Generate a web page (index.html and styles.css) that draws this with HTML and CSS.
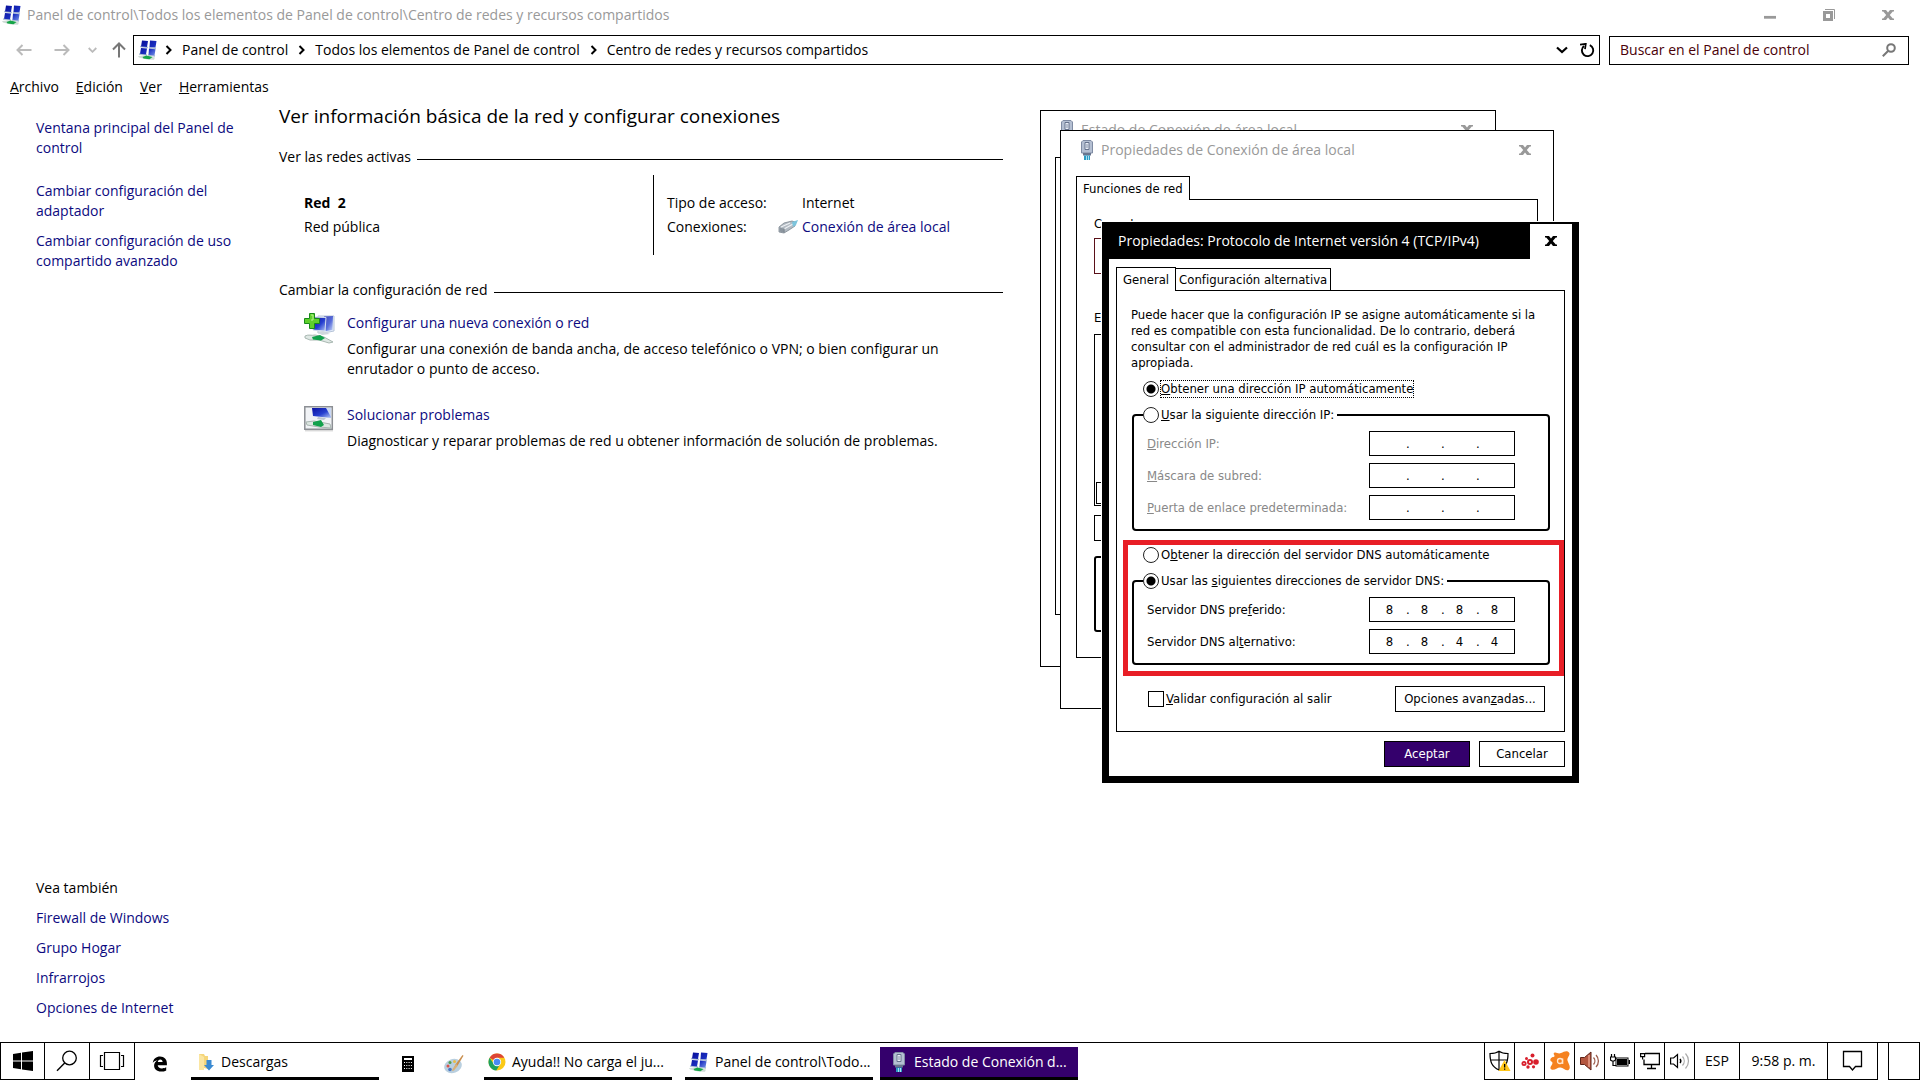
FILE: index.html
```html
<!DOCTYPE html>
<html lang="es">
<head>
<meta charset="utf-8">
<meta name="viewport" content="width=device-width, initial-scale=1">
<title>Centro de redes y recursos compartidos</title>
<link rel="stylesheet" href="styles.css">
</head>
<body>
<svg class="sprite" aria-hidden="true">
  <defs>
    <linearGradient id="screen" x1="0" y1="0" x2="1" y2="1">
      <stop offset="0" stop-color="#0a10a0"/><stop offset=".55" stop-color="#2740d0"/><stop offset="1" stop-color="#b8ccf6"/>
    </linearGradient>
    <linearGradient id="mini" x1="0" y1="0" x2="1" y2="1">
      <stop offset="0" stop-color="#060c98"/><stop offset=".6" stop-color="#1a2fc0"/><stop offset="1" stop-color="#7f9cec"/>
    </linearGradient>
    <symbol id="i-network" viewBox="0 0 20 20">
      <path d="M2 6.500l8 1M11 7.500l7 1M1 14l8 1M10 15l7 1" stroke="#aebfd4" stroke-width="1.500"/>
      <path d="M4 .5l6 .6-1 6-6-.6zM12 .5l6.500.6-1 6.400-6-.6zM3 8l6 .6-1 6-6-.8zM11 8.500l6.500.7-1 6.300-6-.7z" fill="url(#mini)"/>
      <path d="M0 16l6-.6 11 2.200-1 2.200-7-.4-8-2z" fill="#cfdcd6"/>
      <path d="M4.500 17l4-1.600 6 1.700-3 2.100-6-.7z" fill="#16a548"/>
    </symbol>
    <symbol id="i-plug" viewBox="0 0 14 22">
      <path d="M3 1.500h8l1.500 1.500v11h-11V3z" fill="#b4bfd2" stroke="#7f8ba3"/>
      <path d="M5 3.500h4v7H5z" fill="#e9eef6" stroke="#66728c"/>
      <path d="M6.500 5h1v4h-1z" fill="#8390aa"/>
      <path d="M3 14h8v2.500H3z" fill="#69758e"/>
      <path d="M4 16.500h6V21H4z" fill="#2c9bc4"/><path d="M6 17h1v4H6zM8 17h1v4H8z" fill="#a8e2f2"/>
    </symbol>
    <symbol id="i-close" viewBox="0 0 12 12">
      <path d="M0 1h4l2 2.600L8 1h4v1.500h-1.200L7.800 6l3 3.500H12V11H8L6 8.400 4 11H0V9.500h1.200l3-3.500-3-3.500H0z" fill="currentColor"/>
    </symbol>
    <symbol id="i-chevron" viewBox="0 0 8 10"><path d="M1.500 1l4 4-4 4" fill="none" stroke="currentColor" stroke-width="2"/></symbol>
  </defs>
</svg>

<header class="titlebar">
  <svg class="ico20"><use href="#i-network"/></svg>
  <h1>Panel de control\Todos los elementos de Panel de control\Centro de redes y recursos compartidos</h1>
  <div class="caption">
    <button type="button" aria-label="Minimizar"><svg viewBox="0 0 13 12"><path d="M0 7h13v3H0z" fill="#999"/></svg></button>
    <button type="button" aria-label="Restaurar"><svg viewBox="0 0 12 12"><path d="M0 2h10v10H0zM3 5v4h4V5z" fill="#999" fill-rule="evenodd"/><path d="M2 .5h9.500V10" fill="none" stroke="#999"/></svg></button>
    <button type="button" aria-label="Cerrar"><svg viewBox="0 0 12 12"><use href="#i-close"/></svg></button>
  </div>
</header>

<nav class="navbar" aria-label="Navegación">
  <div class="history">
    <button type="button" aria-label="Atrás" class="off"><svg width="16" height="12" viewBox="0 0 16 12"><path d="M15.500 6H1.500M6.500 1l-5 5 5 5" fill="none" stroke="currentColor" stroke-width="2"/></svg></button>
    <button type="button" aria-label="Adelante" class="off"><svg width="16" height="12" viewBox="0 0 16 12"><path d="M.5 6h14M9.500 1l5 5-5 5" fill="none" stroke="currentColor" stroke-width="2"/></svg></button>
    <button type="button" aria-label="Recientes" class="off"><svg width="9" height="6" viewBox="0 0 9 6"><path d="M.7 1l3.800 3.800L8.300 1" fill="none" stroke="currentColor" stroke-width="1.800"/></svg></button>
    <button type="button" aria-label="Subir"><svg width="14" height="16" viewBox="0 0 14 16"><path d="M7 15.500V1.500M1 7.500l6-6 6 6" fill="none" stroke="currentColor" stroke-width="2"/></svg></button>
  </div>
  <div class="address">
    <svg class="ico20"><use href="#i-network"/></svg>
    <svg class="sep"><use href="#i-chevron"/></svg><a href="#">Panel de control</a>
    <svg class="sep"><use href="#i-chevron"/></svg><a href="#">Todos los elementos de Panel de control</a>
    <svg class="sep"><use href="#i-chevron"/></svg><a href="#">Centro de redes y recursos compartidos</a>
    <button type="button" class="push" aria-label="Ubicaciones anteriores"><svg width="12" height="8" viewBox="0 0 12 8"><path d="M1 1.500l5 4.500 5-4.500" fill="none" stroke="#000" stroke-width="2.200"/></svg></button>
    <button type="button" aria-label="Actualizar"><svg width="15" height="15" viewBox="0 0 15 15"><path d="M9.800 2.200a5.700 5.700 0 1 1-5.800.8" fill="none" stroke="#000" stroke-width="1.900"/><path d="M0 1.600L5.800.8 5 6.200" fill="none" stroke="#000" stroke-width="1.700"/></svg></button>
  </div>
  <div class="search">
    <input type="text" aria-label="Buscar en el Panel de control" placeholder="Buscar en el Panel de control">
    <svg width="14" height="14" viewBox="0 0 14 14"><circle cx="9" cy="5" r="3.800" fill="none" stroke="#777" stroke-width="2"/><path d="M6.300 7.700L.8 13.200" stroke="#777" stroke-width="2"/></svg>
  </div>
</nav>

<nav class="menubar" aria-label="Menú">
  <button type="button"><u>A</u>rchivo</button>
  <button type="button"><u>E</u>dición</button>
  <button type="button"><u>V</u>er</button>
  <button type="button"><u>H</u>erramientas</button>
</nav>

<div class="body">
  <aside class="side">
    <ul class="tasks">
      <li class="home"><a href="#">Ventana principal del Panel de control</a></li>
      <li><a href="#">Cambiar configuración del adaptador</a></li>
      <li><a href="#">Cambiar configuración de uso compartido avanzado</a></li>
    </ul>
    <div class="also">
      <h2>Vea también</h2>
      <a href="#">Firewall de Windows</a>
      <a href="#">Grupo Hogar</a>
      <a href="#">Infrarrojos</a>
      <a href="#">Opciones de Internet</a>
    </div>
  </aside>

  <main class="content">
    <h2 class="lead">Ver información básica de la red y configurar conexiones</h2>
    <h3 class="rule">Ver las redes activas</h3>
    <section class="net">
      <div class="net-name"><strong>Red&nbsp; 2</strong><span>Red pública</span></div>
      <dl class="net-info">
        <dt>Tipo de acceso:</dt><dd>Internet</dd>
        <dt>Conexiones:
          <svg class="cable" viewBox="0 0 20 14"><path d="M1 7l5-4 8-2 3 1v4l-6 4-5 3-5-1z" fill="#b3bbc3" stroke="#7c868f" stroke-width=".8"/><path d="M3 7l9-4M6 9l9-5" stroke="#eef1f4" stroke-width="1.200"/><path d="M1.500 7.500l4 1v4l-4-1z" fill="#8b959e"/><path d="M6 8.500v4" stroke="#68747e"/><path d="M14 2l6-2-2 5-3 2z" fill="#7cc4dc"/></svg>
        </dt><dd><a href="#">Conexión de área local</a></dd>
      </dl>
    </section>
    <h3 class="rule">Cambiar la configuración de red</h3>
    <section class="action">
      <svg class="act-ico" viewBox="0 0 32 32">
        <path d="M14 3h16v15l-5 1-11 1z" fill="#e6edf8" stroke="#b6c4d8"/><path d="M20 3.500l9-.5-.5 14-7 1z" fill="url(#screen)" opacity=".75"/><path d="M9 4l13 .5L21 18l-12-1z" fill="url(#screen)" stroke="#d4deee"/>
        <path d="M13 19l6-1 7 3-8 1z" fill="#cfd7dd"/>
        <path d="M1 23c4-2 6 0 10-1l9 2 9 5-4 1-10-3-9 0-5-2z" fill="#dfe8e4" stroke="#a9b8b2"/><path d="M8 24l8-2 5 3-4 2.500-8-1z" fill="#12a14c"/>
        <path d="M5.500.5h5v5h5v5h-5v5h-5v-5h-5v-5h5z" fill="#5fd02c" stroke="#188a1a"/><path d="M7 2h2v5H7" stroke="#b9f391" fill="none"/>
      </svg>
      <div><a href="#">Configurar una nueva conexión o red</a>
      <p>Configurar una conexión de banda ancha, de acceso telefónico o VPN; o bien configurar un enrutador o punto de acceso.</p></div>
    </section>
    <section class="action">
      <svg class="act-ico" viewBox="0 0 32 32">
        <path d="M.8 1.800h27.500v22.500H.8z" fill="#f1f3f6" stroke="#8c8f94" stroke-width="1.500"/><path d="M1 25.800h28" stroke="#c9c9c9"/>
        <path d="M8 3h19v10L9 11z" fill="url(#screen)"/><path d="M22 3h5v9z" fill="#c9d7f4"/><path d="M14 12l8 1-2 2-7-1z" fill="#bcc6d0"/>
        <path d="M2 17l8-1 16 3 1 4-12-1-12-2z" fill="#dde7e2" stroke="#a8b5b0"/><path d="M9 17l8-2 3 5-3 2-8-2z" fill="#12a14c"/>
      </svg>
      <div><a href="#">Solucionar problemas</a>
      <p>Diagnosticar y reparar problemas de red u obtener información de solución de problemas.</p></div>
    </section>
  </main>
</div>

<div class="win win-status" role="dialog" aria-label="Estado de Conexión de área local">
  <div class="win-title"><svg class="plug"><use href="#i-plug"/></svg><span>Estado de Conexión de área local</span><svg class="x"><use href="#i-close"/></svg></div>
  <div class="pane"></div>
</div>

<div class="win win-props" role="dialog" aria-label="Propiedades de Conexión de área local">
  <div class="win-title"><svg class="plug"><use href="#i-plug"/></svg><span>Propiedades de Conexión de área local</span><svg class="x"><use href="#i-close"/></svg></div>
  <div class="tabs"><button type="button" class="tab on">Funciones de red</button></div>
  <div class="pane">
    <span class="line">Conectar</span>
    <div class="adapter"></div>
    <span class="line">Esta</span>
    <div class="items"><div class="scroll"></div></div>
    <div class="btn-edge"></div>
    <div class="desc"></div>
  </div>
</div>

<form class="win win-ip" role="dialog" aria-label="Propiedades: Protocolo de Internet versión 4 (TCP/IPv4)">
  <div class="ip-title"><span>Propiedades: Protocolo de Internet versión 4 (TCP/IPv4)</span><button type="button" aria-label="Cerrar"><svg class="x"><use href="#i-close"/></svg></button></div>
  <div class="tabs"><button type="button" class="tab on">General</button><button type="button" class="tab">Configuración alternativa</button></div>
  <div class="pane">
    <p>Puede hacer que la configuración IP se asigne automáticamente si la red es compatible con esta funcionalidad. De lo contrario, deberá consultar con el administrador de red cuál es la configuración IP apropiada.</p>
    <label class="radio first"><input type="radio" name="ip" checked><span class="focus"><u>O</u>btener una dirección IP automáticamente</span></label>
    <fieldset>
      <legend><label class="radio"><input type="radio" name="ip"><span><u>U</u>sar la siguiente dirección IP:</span></label></legend>
      <div class="row off"><label for="ip1"><u>D</u>irección IP:</label><div class="ip"><input id="ip1" disabled><i>.</i><input aria-label="Dirección IP 2" disabled><i>.</i><input aria-label="Dirección IP 3" disabled><i>.</i><input aria-label="Dirección IP 4" disabled></div></div>
      <div class="row off"><label for="ma1"><u>M</u>áscara de subred:</label><div class="ip"><input id="ma1" disabled><i>.</i><input aria-label="Máscara 2" disabled><i>.</i><input aria-label="Máscara 3" disabled><i>.</i><input aria-label="Máscara 4" disabled></div></div>
      <div class="row off"><label for="pe1"><u>P</u>uerta de enlace predeterminada:</label><div class="ip"><input id="pe1" disabled><i>.</i><input aria-label="Puerta 2" disabled><i>.</i><input aria-label="Puerta 3" disabled><i>.</i><input aria-label="Puerta 4" disabled></div></div>
    </fieldset>
    <div class="mark">
      <label class="radio"><input type="radio" name="dns"><span>O<u>b</u>tener la dirección del servidor DNS automáticamente</span></label>
      <fieldset>
        <legend><label class="radio"><input type="radio" name="dns" checked><span>Usar las <u>s</u>iguientes direcciones de servidor DNS:</span></label></legend>
        <div class="row"><label for="d1">Servidor DNS pre<u>f</u>erido:</label><div class="ip"><input id="d1" value="8"><i>.</i><input aria-label="Preferido 2" value="8"><i>.</i><input aria-label="Preferido 3" value="8"><i>.</i><input aria-label="Preferido 4" value="8"></div></div>
        <div class="row"><label for="a1">Servidor DNS al<u>t</u>ernativo:</label><div class="ip"><input id="a1" value="8"><i>.</i><input aria-label="Alternativo 2" value="8"><i>.</i><input aria-label="Alternativo 3" value="4"><i>.</i><input aria-label="Alternativo 4" value="4"></div></div>
      </fieldset>
    </div>
    <div class="foot"><label class="check"><input type="checkbox"><span><u>V</u>alidar configuración al salir</span></label><button type="button" class="btn wide"><span>Opciones avan<u>z</u>adas...</span></button></div>
  </div>
  <div class="actions"><button type="button" class="btn primary">Aceptar</button><button type="button" class="btn">Cancelar</button></div>
</form>

<footer class="taskbar">
  <button type="button" class="cell start" aria-label="Inicio"><svg width="20" height="20" viewBox="0 0 20 20"><path d="M0 3l8-1.200v7.700H0zM9 1.600L20 0v9.500H9zM0 10.500h8v7.700L0 17zM9 10.500h11V20L9 18.400z"/></svg></button>
  <button type="button" class="cell start" aria-label="Buscar"><svg width="22" height="22" viewBox="0 0 22 22"><circle cx="13.500" cy="8" r="6.800" fill="none" stroke="#000" stroke-width="1.300"/><path d="M8.700 13L1 20.800" stroke="#000" stroke-width="1.400"/></svg></button>
  <button type="button" class="cell start" aria-label="Vista de tareas"><svg width="26" height="20" viewBox="0 0 26 20"><path d="M5.500 1.500h15v17h-15zM4 4.500H1.500v11H4M22 4.500h2.500v11H22" fill="none" stroke="#000" stroke-width="1.200"/></svg></button>
  <button type="button" class="app lone" aria-label="Microsoft Edge"><svg width="16" height="16" viewBox="0 0 16 16"><path d="M.8 7C1.200 3 4.300.6 8 .6c4.400 0 6.900 3 6.900 6.700v1.900H5.700c.2 2 1.900 3.200 4.200 3.200 1.700 0 3-.4 4.300-1.200v3.200c-1.400.8-3.200 1.200-5.200 1.200-4.300 0-6.900-2.500-6.900-6 0-2.400 1.300-4.400 3.500-5.400C3 4.600 1.500 5.700.8 7zm5-.9h4.800c0-1.700-.9-2.700-2.300-2.700S6 4.400 5.800 6.100z"/></svg></button>
  <button type="button" class="app open dl"><svg width="17" height="18" viewBox="0 0 17 18"><path d="M1 1h5l1 2h3v13l-4-1-5 2z" fill="#f5d67b"/><path d="M1 1l5 3v13l-5 0z" fill="#fbe6a2"/><path d="M8.500 7h5v5H16l-5 5.500L6 12h2.500z" fill="#3a8ad2"/></svg>Descargas</button>
  <button type="button" class="app lone calc" aria-label="Calculadora"><svg width="12" height="16" viewBox="0 0 12 16"><path d="M0 0h12v16H0z"/><path d="M2 2h8v2H2z" fill="#fff"/><path d="M2 6.500h8M2 9.500h8M2 12.500h8" stroke="#fff" stroke-width="1" stroke-dasharray="1 1.300"/></svg></button>
  <button type="button" class="app lone paint" aria-label="Paint"><svg width="20" height="20" viewBox="0 0 20 20"><ellipse cx="9" cy="12" rx="9" ry="7" fill="#b9cfdf" transform="rotate(-20 9 12)"/><circle cx="4" cy="12" r="1.500" fill="#d9534a"/><circle cx="6" cy="8.500" r="1.500" fill="#4f9f52"/><circle cx="10.500" cy="7.500" r="1.500" fill="#e9bb45"/><circle cx="6" cy="15.500" r="1.800" fill="#4b78c4"/><path d="M18.500 1l1 .8-6 10-2 2-1-.8 1-2.500z" fill="#c98f4f"/><path d="M12 10l2 1.500-4 5-2 .5.500-2z" fill="#d8b07a"/></svg></button>
  <button type="button" class="app open chrome"><svg width="18" height="18" viewBox="0 0 18 18"><circle cx="9" cy="9" r="8.500" fill="#fbc916"/><path d="M9 9L1.600 4.800A8.500 8.500 0 0 1 16.400 4.800H9z" fill="#dd4436"/><path d="M1.600 4.800A8.500 8.500 0 0 0 8.300 17.500L12.200 11 9 9 5.500 10.500z" fill="#1da15f"/><circle cx="9" cy="9" r="4.200" fill="#fff"/><circle cx="9" cy="9" r="3.300" fill="#4a8af4"/></svg>Ayuda!! No carga el ju...</button>
  <button type="button" class="app open"><svg class="ico20"><use href="#i-network"/></svg>Panel de control\Todo...</button>
  <button type="button" class="app open active"><svg class="plug"><use href="#i-plug"/></svg>Estado de Conexión d...</button>
  <div class="tray">
    <button type="button" class="cell" aria-label="Seguridad"><svg width="22" height="22" viewBox="0 0 22 22"><path d="M10 1.200C7.500 3 4.500 3.500 1 3.500c0 8 1.500 13 9 16.500 7.500-3.500 9-8.500 9-16.500-3.500 0-6.500-.5-9-2.300zM10 1v19M1 10h18" fill="none" stroke="#000" stroke-width="1.200"/><path d="M15.500 10l6 11h-12z" fill="#ffc61a"/><path d="M15 14h1.300v3.500H15zM15 18.500h1.300v1.300H15z"/></svg></button>
    <button type="button" class="cell" aria-label="Utilidad"><svg width="18" height="18" viewBox="0 0 18 18"><g fill="#d81f2c"><circle cx="9" cy="10" r="3"/><circle cx="3" cy="11.500" r="2.500"/><circle cx="15" cy="10" r="2.800"/><circle cx="11.500" cy="3.500" r="2"/><circle cx="5.500" cy="6.500" r="1.500"/><circle cx="7" cy="15" r="1.700"/><circle cx="12.500" cy="14.800" r="1.600"/></g><g fill="#fff"><circle cx="9" cy="10" r="1"/><circle cx="3" cy="11.500" r=".7"/></g></svg></button>
    <button type="button" class="cell" aria-label="Avast"><svg width="20" height="20" viewBox="0 0 20 20"><path d="M4 2c2-1.500 4 1.500 7 0s6-3 8-.5-2.500 5-1.500 8 3.500 6.500 1.500 9-5.500-1.500-8.500-2-6 3.500-9 2 1-4.500 1-6.500-3-1.500-2-4 4-1.500 4-3-1.500-2-.5-3z" fill="#f58220"/><circle cx="10" cy="10" r="2.500" fill="none" stroke="#ffe9d4" stroke-width="1.300"/><path d="M12.700 7.500V13" stroke="#ffe9d4" stroke-width="1.200"/></svg></button>
    <button type="button" class="cell" aria-label="Audio"><svg width="20" height="20" viewBox="0 0 20 20"><path d="M.5 6.500h4L11 1v18l-6.500-5.500h-4z" fill="#b4563f" stroke="#5e2318"/><path d="M9 4v12" stroke="#e8a18c" stroke-width="1.500"/><path d="M13.500 6.500c1.800 2 1.800 5 0 7M16 4c3.200 3.300 3.200 8.700 0 12" fill="none" stroke="#9c5c4c" stroke-width="1.300"/></svg></button>
    <button type="button" class="cell" aria-label="Batería"><svg width="20" height="14" viewBox="0 0 20 14"><path d="M6.500 4.500h11v7h-11zM5.500 3.500h13v9h-13z" fill-rule="evenodd"/><path d="M7 5h10v6H7zM18.500 6H20v4h-1.500z"/><path d="M1.500 0v3M4.500 0v3M.5 3h5v3l-1.500 1h-2L.5 6zM3 7v4.500h3" stroke="#000" fill="none" stroke-width="1.200"/></svg></button>
    <button type="button" class="cell" aria-label="Red"><svg width="20" height="18" viewBox="0 0 20 18"><path d="M5 1.500h14.400v11H4v-5M11.500 12.500v4M7 16.500h9" fill="none" stroke="#000" stroke-width="1.300"/><path d="M.6 1.600h4v3h-4zM2.600 4.600v3" fill="none" stroke="#000" stroke-width="1.200"/></svg></button>
    <button type="button" class="cell" aria-label="Volumen"><svg width="20" height="18" viewBox="0 0 20 18"><path d="M.6 6h3L7.500 2.500v13L3.600 12h-3z" fill="none" stroke="#000" stroke-width="1.200"/><path d="M10 7c1 1.200 1 2.800 0 4" fill="none" stroke="#000" stroke-width="1.400"/><path d="M12.500 4.500c2.300 2.600 2.300 6.400 0 9M15.500 1.500c4 4.300 4 10.700 0 15" fill="none" stroke="#aaa" stroke-width="1.200"/></svg></button>
    <button type="button" class="cell lang">ESP</button>
    <button type="button" class="cell clock">9:58 p. m.</button>
    <button type="button" class="cell note" aria-label="Notificaciones"><svg width="22" height="22" viewBox="0 0 22 22"><path d="M1.500 1.500h18v15h-6L10.500 20l-3-3.500h-6z" fill="none" stroke="#000" stroke-width="1.300"/></svg></button>
    <button type="button" class="cell peek" aria-label="Mostrar escritorio"></button>
  </div>
</footer>
</body>
</html>
```
FILE: styles.css
```css
:root {
  --ui: "Open Sans", "Noto Sans", sans-serif;
  --dlg: "DejaVu Sans Condensed", "DejaVu Sans", sans-serif;
  --link: #0c0a80;
  --accent: #34006c;
}
* { box-sizing: border-box; }
html, body { margin: 0; }
body {
  position: relative;
  display: flex;
  flex-direction: column;
  min-height: 100vh;
  background: #fff;
  color: #000;
  font: 14px/20px var(--ui);
}
h1, h2, h3, p, ul, dl, dd, fieldset { margin: 0; padding: 0; font-size: inherit; font-weight: 400; }
ul { list-style: none; }
a { color: var(--link); text-decoration: none; }
button, input { font: inherit; color: inherit; margin: 0; padding: 0; border: 0; background: none; border-radius: 0; }
button { display: flex; align-items: center; justify-content: center; }
svg { display: block; flex: none; }
.sprite { position: absolute; width: 0; height: 0; }
.ico20 { width: 20px; height: 20px; }
.plug { width: 14px; height: 22px; }
.x { width: 12px; height: 12px; }

.titlebar { display: flex; align-items: center; height: 30px; padding: 0 26px 0 2px; gap: 5px; color: #999; }
.caption { display: flex; margin-left: auto; gap: 47px; height: 24px; }
.caption svg { width: 12px; height: 12px; }

.navbar { display: flex; align-items: center; height: 40px; padding-right: 11px; }
.history { display: flex; align-items: center; width: 133px; padding-left: 16px; gap: 22px; color: #777; }
.history .off { color: #bbb; }
.history button:nth-child(n+3) { margin-left: -4px; }
.history button:last-child { margin-left: -7px; }
.address { flex: 1; display: flex; align-items: center; height: 30px; padding: 0 4px; border: 1px solid #000; }
.address a { color: #000; }
.address .ico20 { margin-right: -3px; }
.address .sep { width: 8px; height: 10px; margin: 0 9px 0 10px; }
.address .push { margin: 0 12px 0 auto; }
.search { display: flex; align-items: center; width: 300px; height: 29px; margin-left: 9px; padding: 0 12px 0 10px; border: 1px solid #000; }
.search input { flex: 1; min-width: 0; outline: 0; }
.search input::placeholder { color: #4a0008; opacity: 1; }

.menubar { display: flex; height: 34px; padding: 0 10px; gap: 17px; }

.body { flex: 1; display: flex; }
.side { display: flex; flex-direction: column; justify-content: space-between; width: 279px; padding: 14px 36px 24px; }
.tasks { width: 208px; }
.tasks li { margin-bottom: 10px; }
.tasks .home { margin-bottom: 23px; }
.also { display: grid; gap: 10px; }

.content { flex: 1; max-width: 724px; }
.lead { font-size: 19px; line-height: 24px; }
.rule { display: flex; align-items: center; gap: 6px; margin-top: 19px; }
.rule::after { content: ""; flex: 1; height: 1px; margin-top: 5px; background: #000; }
.net { display: flex; height: 80px; margin: 8px 0 25px; padding-left: 25px; }
.net-name { display: grid; align-content: center; gap: 4px; flex: 1; }
.net-info { display: grid; grid-template-columns: 135px auto; align-content: center; gap: 4px 0; width: 350px; padding-left: 13px; border-left: 1px solid #000; }
.net-info dt { display: flex; align-items: center; justify-content: space-between; }
.cable { width: 20px; height: 14px; margin-right: 4px; }
.action { display: flex; gap: 11px; margin-top: 13px; padding-left: 25px; min-height: 79px; }
.action p { margin-top: 6px; max-width: 620px; }
.act-ico { width: 32px; height: 32px; }

.win { position: absolute; background: #fff; border: 1px solid #000; font: 13px/16px var(--dlg); }
.win-title { display: flex; align-items: center; height: 38px; padding: 0 22px 0 19px; gap: 7px; color: #999; font: 14px/20px var(--ui); }
.win-title .x { margin-left: auto; }
.tabs { display: flex; align-items: flex-end; }
.tab { height: 22px; padding: 0 3px; border: 1px solid #000; border-bottom: 0; }
.tab + .tab { border-left: 0; }
.tab.on { z-index: 1; height: 24px; margin-bottom: -1px; padding: 0 6px; background: #fff; }
.pane { border: 1px solid #000; }

.win-status { left: 1040px; top: 110px; width: 456px; height: 557px; }
.win-status .pane { height: 458px; margin: 8px 14px 0; }

.win-props { left: 1060px; top: 130px; width: 494px; height: 579px; }
.win-props .tabs { margin: 7px 15px 0; }
.win-props .pane { height: 459px; margin: 0 15px; padding: 14px 17px 0; }
.line { display: block; height: 24px; line-height: 20px; }
.adapter { height: 36px; margin-bottom: 34px; border: 1px solid #5a1018; }
.items { display: flex; align-items: flex-end; height: 172px; margin-top: 2px; padding: 1px; border: 1px solid #000; }
.scroll { flex: 1; height: 22px; border: 1px solid #000; }
.btn-edge { height: 26px; margin: 9px 0 15px; border: 1px solid #000; }
.desc { height: 76px; border: 2px solid #000; border-radius: 3px; }

.win-ip { left: 1102px; top: 222px; width: 477px; border: solid #000; border-width: 1px 7px 7px; outline: 1px solid #fff; }
.ip-title { display: flex; height: 36px; padding-left: 9px; justify-content: space-between; align-items: center; background: #000; color: #fff; font: 14px/20px var(--ui); }
.ip-title button { width: 42px; height: 35px; background: #fff; color: #000; }
.win-ip .tabs { margin: 8px 7px 0; }
.win-ip .pane { height: 442px; margin: 0 7px; padding: 16px 0 0 6px; }
.win-ip .pane > p { margin: 0 0 8px 8px; max-width: 412px; }
.radio, .check { display: flex; align-items: center; width: fit-content; height: 20px; gap: 2px; }
.radio input { appearance: none; width: 16px; height: 16px; border: 1px solid #222; border-radius: 50%; background: #fff; }
.radio input:checked { background: radial-gradient(circle, #000 4px, #fff 5px); }
.check input { appearance: none; width: 16px; height: 16px; border: 1px solid #000; }
.radio.first { margin: 0 0 6px 20px; }
.focus { outline: 1px dotted #000; }
.win-ip fieldset { margin: 0 14px 0 9px; padding: 0 33px 0 13px; border: 2px solid #000; border-radius: 4px; height: 126px; }
.win-ip legend { margin-left: -4px; padding: 0 3px 0 0; }
.row { display: flex; align-items: center; justify-content: space-between; height: 25px; margin: 6px 0 7px; }
.row + .row { margin-top: 0; }
.row.off label { color: #888; }
.ip { display: grid; grid-template-columns: 33px 2px 33px 2px 33px 2px 33px; justify-content: center; width: 146px; height: 25px; border: 1px solid #000; align-items: center; }
.ip input { width: 100%; text-align: center; outline: 0; }
.ip i { font-style: normal; text-align: center; }
.mark { margin: 9px 0 10px; height: 136px; border: 5px solid #e81e26; }
.mark > .radio { margin: 0 0 6px 15px; }
.mark fieldset { margin: 0 9px 0 4px; height: 94px; }
.foot { display: flex; align-items: center; justify-content: space-between; padding: 0 19px 0 25px; }
.btn { width: 86px; height: 26px; border: 1px solid #000; background: #fff; }
.btn.wide { width: 150px; }
.btn.primary { background: var(--accent); color: #fff; }
.actions { display: flex; justify-content: flex-end; gap: 9px; padding: 9px 7px 9px; }

.taskbar { display: flex; align-items: stretch; height: 38px; border-top: 1px solid #000; }
.cell { width: 30px; border: solid #000; border-width: 0 1px 1px 0; }
.start { width: 45px; }
.start:first-child { border-left-width: 1px; }
.app { height: 33px; margin-top: 4px; justify-content: flex-start; gap: 6px; white-space: nowrap; }
.app.open { width: 188px; padding-left: 4px; border-bottom: 3px solid #000; }
.lone { justify-content: center; width: 50px; }
.app.dl { margin-left: 6px; padding-left: 7px; }
.calc { margin-left: 4px; }
.paint { margin: 4px 5px 0 -4px; }
.chrome { margin-right: 13px; }
.app.active { width: 198px; margin-left: 7px; padding-left: 12px; gap: 8px; background: var(--accent); color: #fff; }
.tray { display: flex; margin-left: auto; border-left: 1px solid #000; }
.lang { width: 45px; }
.clock { width: 88px; }
.note { width: 50px; }
.peek { width: 32px; margin-left: 10px; border-left-width: 1px; }
```
